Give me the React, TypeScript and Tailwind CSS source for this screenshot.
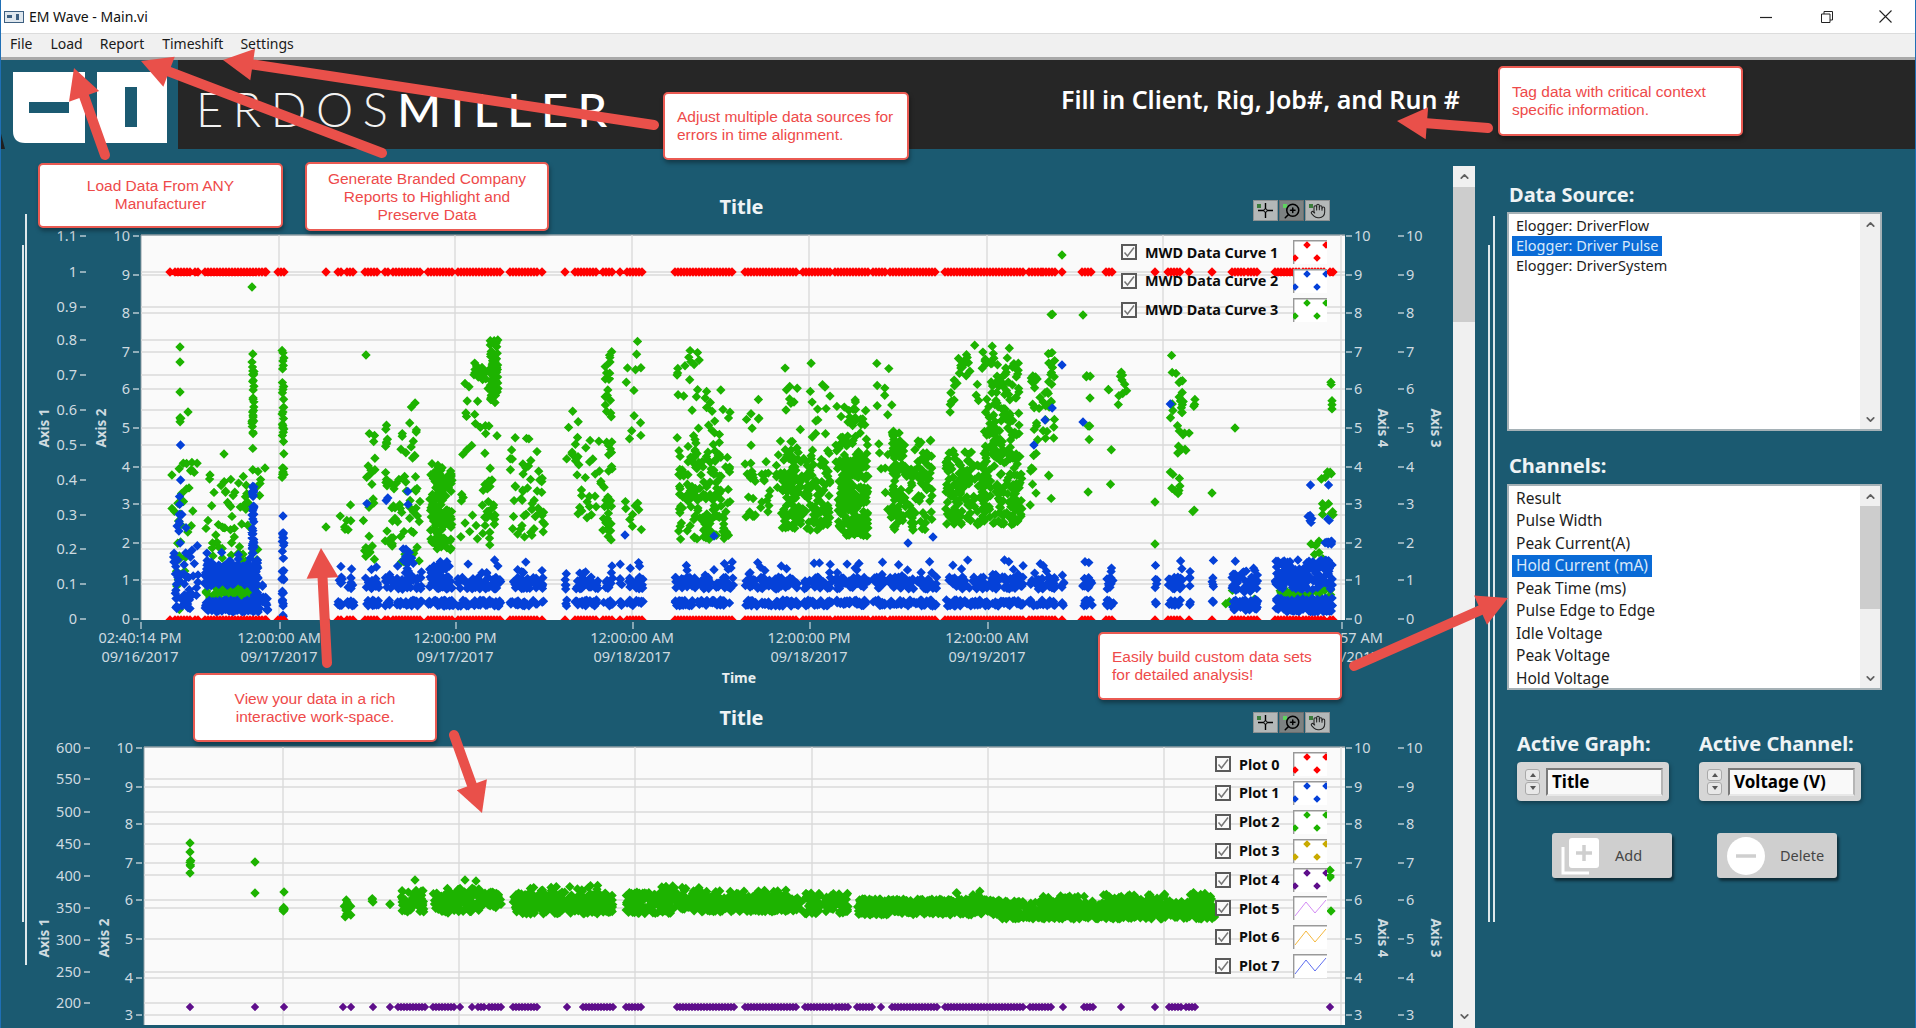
import React from 'react';
import { ChevronUp, ChevronDown, Hand, ZoomIn } from 'lucide-react';

type Seg = [number, number];
type Cluster = [number, number, number, number, number];

const RED_SEGS: Seg[] = [
  [170, 171], [175, 190], [195, 199], [205, 265], [266, 268], [278, 285], [326, 327], [338, 342], [347, 353],
  [365, 378], [385, 390], [393, 417], [420, 421], [428, 453], [458, 500], [510, 537], [542, 543], [565, 566],
  [575, 597], [603, 612], [620, 621], [627, 643], [675, 733], [745, 798], [803, 831], [835, 868], [873, 885],
  [890, 936], [945, 1023], [1029, 1042], [1043, 1055], [1062, 1063], [1082, 1092], [1106, 1114], [1155, 1156],
  [1168, 1182], [1189, 1190], [1212, 1213], [1232, 1245], [1248, 1258], [1275, 1300], [1303, 1326], [1330, 1333],
];

const G1_GREEN: Cluster[] = [
  [180, 180, 347, 347, 1], [180, 180, 362, 362, 1], [180, 180, 392, 392, 1], [180, 181, 416, 424, 4], [188, 188, 412, 412, 1],
  [171, 198, 460, 530, 22], [176, 188, 530, 610, 12], [224, 224, 454, 454, 1], [207, 250, 475, 520, 24], [205, 258, 520, 575, 34],
  [205, 258, 582, 598, 90], [252, 254, 352, 410, 16], [252, 254, 410, 470, 14], [256, 262, 470, 500, 5], [265, 265, 468, 468, 1],
  [251, 252, 287, 287, 1], [282, 284, 347, 480, 34], [326, 326, 527, 527, 1], [340, 352, 502, 530, 7], [366, 366, 355, 355, 1],
  [366, 375, 430, 480, 9], [362, 375, 480, 560, 14], [385, 388, 405, 500, 10], [385, 395, 500, 560, 9],
  [398, 420, 400, 460, 14], [390, 420, 470, 570, 40], [428, 452, 450, 500, 14], [430, 452, 470, 550, 130], [458, 500, 370, 430, 10],
  [474, 486, 360, 380, 18], [490, 498, 340, 400, 60], [460, 500, 400, 540, 26], [480, 500, 480, 545, 20],
  [510, 538, 400, 470, 9], [512, 540, 460, 545, 34], [540, 545, 478, 532, 9], [565, 580, 410, 480, 8], [575, 600, 440, 520, 26],
  [605, 612, 350, 470, 26], [600, 612, 470, 540, 24], [626, 645, 340, 440, 12], [625, 642, 500, 535, 9],
  [676, 700, 350, 390, 12], [675, 730, 390, 460, 30], [678, 730, 450, 540, 150], [745, 760, 380, 450, 7], [745, 770, 460, 520, 30],
  [775, 800, 440, 520, 30], [785, 830, 360, 440, 22], [782, 830, 450, 530, 160], [835, 870, 400, 470, 60], [838, 868, 460, 536, 190],
  [875, 892, 360, 420, 8], [878, 900, 430, 520, 20], [892, 900, 430, 530, 60], [900, 932, 440, 530, 90], [945, 995, 345, 420, 38],
  [945, 985, 450, 525, 130], [985, 1020, 360, 450, 70], [982, 1022, 430, 525, 170], [1005, 1015, 345, 380, 6],
  [1030, 1040, 375, 400, 7], [1032, 1040, 395, 440, 9], [1030, 1038, 440, 505, 8], [1045, 1055, 350, 415, 18], [1040, 1055, 400, 440, 8],
  [1045, 1056, 465, 520, 3], [1062, 1062, 255, 255, 1], [1045, 1053, 313, 315, 2], [1083, 1083, 315, 315, 1], [1086, 1092, 375, 380, 3],
  [1090, 1090, 398, 398, 1], [1088, 1090, 425, 440, 3], [1085, 1090, 492, 492, 1], [1108, 1111, 387, 400, 2], [1110, 1112, 445, 490, 2],
  [1118, 1128, 372, 410, 9], [1155, 1155, 502, 502, 1], [1155, 1155, 544, 544, 1], [1170, 1178, 355, 380, 3], [1170, 1185, 372, 420, 14],
  [1172, 1190, 420, 455, 10], [1170, 1180, 470, 500, 9], [1193, 1195, 388, 410, 3], [1192, 1196, 505, 512, 2], [1212, 1212, 493, 493, 1], [1235, 1235, 428, 428, 1],
  [1310, 1330, 540, 560, 6], [1320, 1332, 470, 480, 6], [1330, 1332, 380, 385, 2], [1332, 1332, 400, 412, 3], [1322, 1334, 500, 520, 8],
  [1280, 1320, 590, 600, 24], [1318, 1332, 585, 600, 10], [1220, 1255, 590, 604, 5],
];

const G1_BLUE: Cluster[] = [
  [180, 182, 445, 445, 1], [180, 181, 480, 480, 1], [176, 190, 495, 535, 9], [172, 198, 540, 580, 16], [175, 198, 572, 610, 32],
  [205, 258, 552, 580, 30], [205, 258, 565, 586, 150], [205, 260, 600, 612, 130], [252, 254, 486, 560, 40], [253, 258, 560, 612, 40],
  [262, 268, 585, 612, 12], [283, 283, 516, 516, 1], [282, 284, 530, 620, 30], [366, 368, 500, 515, 1], [385, 388, 495, 510, 2],
  [400, 412, 490, 510, 2], [402, 412, 545, 590, 20], [428, 452, 565, 590, 40], [434, 450, 555, 570, 6], [1062, 1062, 365, 365, 1],
  [1033, 1035, 445, 445, 1], [1044, 1046, 420, 420, 1], [1052, 1053, 408, 408, 1], [1083, 1083, 422, 422, 1],
  [1170, 1172, 404, 404, 1], [1310, 1312, 485, 485, 1], [1328, 1330, 485, 485, 1], [1308, 1312, 515, 525, 5], [1326, 1332, 518, 522, 2], [1325, 1333, 540, 545, 8],
  [1275, 1333, 560, 590, 130], [1275, 1333, 598, 612, 110], [1232, 1258, 570, 592, 16], [1232, 1258, 598, 612, 12],
  [625, 625, 535, 535, 1], [714, 714, 536, 536, 1], [908, 908, 543, 543, 1], [933, 933, 537, 537, 1],
];

const G2_GREEN: Cluster[] = [
  [190, 190, 843, 843, 1], [190, 190, 852, 852, 1], [190, 191, 860, 868, 6], [190, 190, 873, 873, 1], [255, 255, 862, 862, 1], [255, 255, 893, 893, 1],
  [284, 284, 892, 892, 1], [283, 285, 902, 911, 6], [343, 353, 900, 917, 12], [372, 374, 897, 905, 4], [390, 390, 897, 905, 4],
  [401, 425, 890, 912, 50], [415, 415, 880, 880, 1], [432, 480, 888, 912, 120], [448, 448, 913, 913, 1], [465, 465, 880, 880, 1], [476, 476, 881, 881, 1],
  [480, 500, 892, 908, 26], [489, 503, 894, 906, 14],
  [513, 613, 893, 914, 300], [528, 600, 885, 893, 20], [626, 680, 892, 914, 160], [660, 700, 886, 898, 20], [680, 800, 896, 912, 320], [690, 790, 890, 898, 26],
  [803, 848, 893, 914, 90], [857, 1000, 899, 915, 420], [970, 982, 890, 898, 8], [955, 960, 893, 893, 2], [1000, 1215, 901, 919, 640], [1040, 1170, 894, 902, 50],
  [1190, 1215, 892, 900, 14], [1330, 1330, 870, 880, 6], [1331, 1331, 911, 911, 1],
];

const PURPLE_SEGS: Seg[] = [
  [190, 191], [255, 256], [284, 285], [343, 344], [351, 352], [373, 374], [390, 391], [398, 425], [433, 445], [448, 455], [460, 461], [472, 473], [478, 485],
  [489, 503], [513, 538], [567, 568], [583, 613], [626, 643], [677, 736], [745, 798], [805, 832], [836, 848], [857, 872], [881, 882], [892, 939],
  [945, 1024], [1030, 1053], [1063, 1064], [1084, 1093], [1121, 1122], [1155, 1156], [1169, 1181], [1186, 1196], [1330, 1331],
];

const makeRng = (seed: number) => () => {
  seed = (seed * 1664525 + 1013904223) % 4294967296;
  return seed / 4294967296;
};

const diamond = (x: number, y: number, r = 4.7) =>
  `M${x.toFixed(1)} ${(y - r).toFixed(1)}L${(x + r).toFixed(1)} ${y.toFixed(1)}L${x.toFixed(1)} ${(y + r).toFixed(1)}L${(x - r).toFixed(1)} ${y.toFixed(1)}Z`;

const scatter = (clusters: Cluster[], seed: number, r = 4.7) => {
  const rand = makeRng(seed);
  let d = '';
  clusters.forEach(([x0, x1, y0, y1, n]) => {
    for (let i = 0; i < n; i++) d += diamond(x0 + (x1 - x0) * rand(), y0 + (y1 - y0) * rand(), r);
  });
  return d;
};

const rowAlong = (segs: Seg[], y: number, r = 4.7) => {
  let d = '';
  segs.forEach(([a, b]) => {
    for (let x = a; x <= b; x += 3) d += diamond(x, y, r);
  });
  return d;
};

const blueBands = () => {
  const rand = makeRng(77);
  let d = '';
  RED_SEGS.filter(s => s[0] > 335 && s[0] < 1270).forEach(([a, b]) => {
    const w = b - a + 1;
    for (let i = 0; i < w * 1.1 + 1; i++) d += diamond(a + w * rand(), 577 + 12 * rand());
    for (let i = 0; i < w * 0.12; i++) d += diamond(a + w * rand(), 560 + 16 * rand());
    for (let i = 0; i < w * 0.9 + 1; i++) d += diamond(a + w * rand(), 600 + 6 * rand());
  });
  return d;
};

const CURVE1 = {
  green: scatter(G1_GREEN, 11),
  blue: scatter(G1_BLUE, 23) + blueBands(),
  red: rowAlong(RED_SEGS, 272),
  redLow: rowAlong(RED_SEGS, 620),
};
const CURVE2 = {
  green: scatter(G2_GREEN, 37),
  purple: rowAlong(PURPLE_SEGS, 1007, 4.2),
};

const TXT = '#cfdbe0';

const LeftTicks: React.FC<{ ticks: [string, number][]; right: number }> = ({ ticks, right }) => (
  <>
    {ticks.map(([label, y]) => (
      <g key={label + y}>
        <text x={right} y={y + 5} textAnchor="end" fill={TXT} fontSize="14.5">{label}</text>
        <line x1={right + 3} x2={right + 9} y1={y} y2={y} stroke={TXT} strokeWidth="1.3" />
      </g>
    ))}
  </>
);

const RightTicks: React.FC<{ ticks: [string, number][]; left: number }> = ({ ticks, left }) => (
  <>
    {ticks.map(([label, y]) => (
      <g key={label + y}>
        <line x1={left} x2={left + 6} y1={y} y2={y} stroke={TXT} strokeWidth="1.3" />
        <text x={left + 8} y={y + 5} fill={TXT} fontSize="14.5">{label}</text>
      </g>
    ))}
  </>
);

const AxisTitle: React.FC<{ x: number; y: number; up?: boolean; label: string }> = ({ x, y, up, label }) => (
  <text transform={`translate(${x} ${y}) rotate(${up ? -90 : 90})`} textAnchor="middle" fill={TXT} fontSize="13.5" fontWeight="700">{label}</text>
);

const Grid: React.FC<{ x0: number; x1: number; y0: number; y1: number; hs: number[]; vs: number[] }> = ({ x0, x1, y0, y1, hs, vs }) => (
  <>
    <rect x={x0} y={y0} width={x1 - x0} height={y1 - y0} fill="#fafafa" />
    <line x1={x0} x2={x1} y1={y0} y2={y0} stroke="#8f9ea5" strokeWidth="1.5" />
    <line x1={x0} x2={x0} y1={y0} y2={y1} stroke="#8f9ea5" strokeWidth="1" />
    {hs.map(y => <line key={y} x1={x0} x2={x1} y1={y} y2={y} stroke="#dadada" strokeWidth="1.4" />)}
    {vs.map(x => <line key={x} x1={x} x2={x} y1={y0} y2={y1} stroke="#dadada" strokeWidth="1.4" />)}
  </>
);

const AXIS2_A: [string, number][] = [['10', 236], ['9', 275], ['8', 313], ['7', 352], ['6', 389], ['5', 428], ['4', 467], ['3', 504], ['2', 543], ['1', 580], ['0', 619]];
const AXIS1_A: [string, number][] = [['1.1', 236], ['1', 272], ['0.9', 307], ['0.8', 340], ['0.7', 375], ['0.6', 410], ['0.5', 445], ['0.4', 480], ['0.3', 515], ['0.2', 549], ['0.1', 584], ['0', 619]];
const AXIS2_B: [string, number][] = [['10', 748], ['9', 787], ['8', 824], ['7', 863], ['6', 900], ['5', 939], ['4', 978], ['3', 1015]];
const AXIS1_B: [string, number][] = [['600', 748], ['550', 779], ['500', 812], ['450', 844], ['400', 876], ['350', 908], ['300', 940], ['250', 972], ['200', 1003]];

const XLABELS: [string, string, number][] = [
  ['02:40:14 PM', '09/16/2017', 140],
  ['12:00:00 AM', '09/17/2017', 279],
  ['12:00:00 PM', '09/17/2017', 455],
  ['12:00:00 AM', '09/18/2017', 632],
  ['12:00:00 PM', '09/18/2017', 809],
  ['12:00:00 AM', '09/19/2017', 987],
  ['01:24:57 AM', '09/20/2017', 1341],
];

const ChartOne = () => (
  <svg width="1453" height="477" viewBox="0 221 1453 477" className="block" fontFamily="'Noto Sans', sans-serif">
    <defs><clipPath id="clip-a"><rect x="141" y="235" width="1204" height="385" /></clipPath></defs>
    <Grid x0={141} x1={1345} y0={235} y1={620}
      hs={[272, 275, 307, 313, 340, 352, 375, 389, 410, 428, 445, 467, 480, 504, 515, 543, 549, 580, 584]}
      vs={[279, 455, 632, 809, 987, 1163, 1341]} />
    <g clipPath="url(#clip-a)">
      <path d={CURVE1.green} fill="#1db300" />
      <path d={CURVE1.blue} fill="#0541d8" />
      <path d={CURVE1.red} fill="#ff0000" />
      <path d={CURVE1.redLow} fill="#ff0000" />
    </g>
    <LeftTicks ticks={AXIS1_A} right={77} />
    <LeftTicks ticks={AXIS2_A} right={130} />
    <RightTicks ticks={AXIS2_A} left={1346} />
    <RightTicks ticks={AXIS2_A} left={1398} />
    <AxisTitle x={49} y={428} up label="Axis 1" />
    <AxisTitle x={106} y={428} up label="Axis 2" />
    <AxisTitle x={1378} y={428} label="Axis 4" />
    <AxisTitle x={1431} y={428} label="Axis 3" />
    {XLABELS.map(([a, b, x]) => (
      <g key={a + b}>
        <line x1={x + 1} x2={x + 1} y1={622} y2={629} stroke={TXT} strokeWidth="1.2" />
        <text x={x} y={643} textAnchor="middle" fill={TXT} fontSize="14.5">{a}</text>
        <text x={x} y={662} textAnchor="middle" fill={TXT} fontSize="14.5">{b}</text>
      </g>
    ))}
    <text x={739} y={683} textAnchor="middle" fill="#e8eef0" fontSize="14" fontWeight="700">Time</text>
  </svg>
);

const ChartTwo = () => (
  <svg width="1453" height="295" viewBox="0 733 1453 295" className="block" fontFamily="'Noto Sans', sans-serif">
    <defs><clipPath id="clip-b"><rect x="144" y="747" width="1201" height="278" /></clipPath></defs>
    <Grid x0={144} x1={1345} y0={747} y1={1025}
      hs={[779, 787, 812, 824, 844, 863, 875, 900, 908, 939, 972, 978, 1003, 1015]}
      vs={[283, 459, 635, 812, 988, 1164, 1341]} />
    <g clipPath="url(#clip-b)">
      <path d={CURVE2.green} fill="#1db300" />
      <path d={CURVE2.purple} fill="#5e0e8b" />
    </g>
    <LeftTicks ticks={AXIS1_B} right={81} />
    <LeftTicks ticks={AXIS2_B} right={133} />
    <RightTicks ticks={AXIS2_B} left={1346} />
    <RightTicks ticks={AXIS2_B} left={1398} />
    <AxisTitle x={49} y={938} up label="Axis 1" />
    <AxisTitle x={109} y={938} up label="Axis 2" />
    <AxisTitle x={1378} y={938} label="Axis 4" />
    <AxisTitle x={1431} y={938} label="Axis 3" />
  </svg>
);

const Toolbar = () => (
  <div className="flex gap-[1px] mr-[15px]">
    <div className="relative w-[25px] h-[21px] bg-[#b4b8b8] border border-[#8d9192] flex items-center justify-center">
      <span className="absolute left-[3px] top-[3px] w-[4px] h-[4px] bg-[#3c7d3c]" />
      <svg width="17" height="17" viewBox="0 0 17 17"><path d="M8.5 1v15M1 8.5h15" stroke="#000" strokeWidth="1.4" /><circle cx="8.5" cy="8.5" r="1.6" fill="#b4b8b8" stroke="#000" /></svg>
    </div>
    <div className="relative w-[25px] h-[21px] bg-[#7d8282] border border-[#6a6e6f] flex items-center justify-center">
      <span className="absolute left-[3px] top-[3px] w-[4px] h-[4px] bg-[#5fd35f]" />
      <ZoomIn className="w-[18px] h-[18px] text-black scale-x-[-1]" strokeWidth={2} />
    </div>
    <div className="relative w-[25px] h-[21px] bg-[#b4b8b8] border border-[#8d9192] flex items-center justify-center">
      <span className="absolute left-[3px] top-[3px] w-[4px] h-[4px] bg-[#3c7d3c]" />
      <Hand className="w-[16px] h-[16px] text-[#222]" strokeWidth={1.6} />
    </div>
  </div>
);

const GraphTitle: React.FC<{ h: string; mb: string }> = ({ h, mb }) => (
  <div className={`ml-[138px] w-[1207px] flex items-end ${h}`}>
    <div className="flex-1" />
    <div className={`text-[20px] leading-[26px] font-bold text-[#eef3f5] ${mb}`}>Title</div>
    <div className="flex-1 flex justify-end"><Toolbar /></div>
  </div>
);

const Swatch: React.FC<{ color: string; line?: boolean }> = ({ color, line }) => (
  <svg width="34" height="24" viewBox="0 0 34 24" className="block">
    <rect width="34" height="24" fill="#fff" />
    <path d="M0.7 24V0.7H34" fill="none" stroke="#999" strokeWidth="1.4" />
    {line ? (
      <path d="M2 20L13 6L22 17L33 4" fill="none" stroke={color} strokeWidth="1" />
    ) : (
      <path d={diamond(14, 5, 3.8) + diamond(33, 5, 3.8) + diamond(2, 18, 3.8) + diamond(24, 18, 3.8)} fill={color} />
    )}
  </svg>
);

const CheckBox = () => (
  <div className="w-[16px] h-[16px] border-2 border-[#5a5a5a] bg-[#fafafa] flex items-center justify-center">
    <svg width="12" height="12" viewBox="0 0 12 12"><path d="M1.5 6.5L4.5 10L11 1.5" fill="none" stroke="#777" strokeWidth="1.5" /></svg>
  </div>
);

const LegendRow: React.FC<{ label: string; color: string; line?: boolean; textW: string }> = ({ label, color, line, textW }) => (
  <div className="flex items-center h-[28.8px]">
    <CheckBox />
    <span className={`ml-[8px] ${textW} text-[14.4px] font-bold text-[#0c0c0c] whitespace-nowrap`}>{label}</span>
    <Swatch color={color} line={line} />
  </div>
);

const ListBox: React.FC<{ w: string; h: string; children: React.ReactNode; thumb?: string; pt: string }> = ({ w, h, children, thumb, pt }) => (
  <div className={`${w} ${h} flex bg-white border-2 border-[#a5b1b6] overflow-hidden`}>
    <div className={`flex-1 pl-[3px] ${pt} overflow-hidden`}>{children}</div>
    <div className="w-[20px] bg-[#f0f0f0] flex flex-col items-center justify-between">
      <div className="w-full">
        <div className="h-[20px] flex items-center justify-center"><ChevronUp className="w-[13px] h-[13px] text-[#606060]" strokeWidth={3.2} /></div>
        {thumb && <div className={`${thumb} bg-[#cdcdcd]`} />}
      </div>
      <div className="h-[20px] flex items-center justify-center"><ChevronDown className="w-[13px] h-[13px] text-[#606060]" strokeWidth={3.2} /></div>
    </div>
  </div>
);

const ListItem: React.FC<{ label: string; selected?: boolean; cls: string }> = ({ label, selected, cls }) => (
  <div className={`${cls} flex items-center text-[#1d1d1d]`}>
    <span className={selected ? 'bg-[#0a6bd6] text-[#d9e9fb] px-[4px] h-full flex items-center' : 'px-[4px]'}>{label}</span>
  </div>
);

const Spinner = () => (
  <div className="w-[15px] h-[26px] flex flex-col gap-[1px]">
    <div className="flex-1 bg-[#e8e8e8] border border-[#a9a9a9] rounded-[3px] flex items-center justify-center">
      <span className="w-0 h-0 border-x-[3.5px] border-x-transparent border-b-[4px] border-b-[#555]" />
    </div>
    <div className="flex-1 bg-[#e8e8e8] border border-[#a9a9a9] rounded-[3px] flex items-center justify-center">
      <span className="w-0 h-0 border-x-[3.5px] border-x-transparent border-t-[4px] border-t-[#555]" />
    </div>
  </div>
);

const Ring: React.FC<{ label: string; w: string; box: string }> = ({ label, w, box }) => (
  <div className={`${w} h-[39px] bg-[#d6d6d6] rounded-[4px] shadow-[1px_2px_4px_rgba(0,0,0,0.35)] flex items-center pl-[8px] gap-[6px]`}>
    <Spinner />
    <div className={`${box} h-[28px] bg-[#f9f9f9] border-2 border-t-[#7a7a7a] border-l-[#7a7a7a] border-r-[#b5b5b5] border-b-[#e8e8e8] flex items-center pl-[4px] text-[17px] font-bold text-black`}>{label}</div>
  </div>
);

const Callout: React.FC<{ cls: string; children: React.ReactNode }> = ({ cls, children }) => (
  <div className={`absolute bg-white border-2 border-[#ea5a52] rounded-[5px] shadow-[1px_3px_4px_rgba(0,0,0,0.35)] text-[#ee4a4a] text-[15.5px] leading-[18px] font-['Liberation_Sans',sans-serif] ${cls}`}>
    {children}
  </div>
);

const Arrow: React.FC<{ from: [number, number]; to: [number, number] }> = ({ from, to }) => {
  const dx = to[0] - from[0];
  const dy = to[1] - from[1];
  const len = Math.hypot(dx, dy);
  const ux = dx / len;
  const uy = dy / len;
  const bx = to[0] - ux * 30;
  const by = to[1] - uy * 30;
  const w = 16;
  return (
    <g>
      <line x1={from[0]} y1={from[1]} x2={bx} y2={by} stroke="#e9504a" strokeWidth="10" strokeLinecap="round" />
      <polygon points={`${to[0]},${to[1]} ${bx - uy * w},${by + ux * w} ${bx + uy * w},${by - ux * w}`} fill="#e9504a" />
    </g>
  );
};

const Logo = () => (
  <svg width="178" height="89" viewBox="0 0 178 89" className="block">
    <path d="M0 70L5 89H0Z" fill="#1f1f1f" />
    <path d="M13 12H85V83H25Q13 83 13 71Z" fill="#fff" />
    <path d="M97 12H167V83H97Z" fill="#fff" />
    <rect x="29" y="42" width="40" height="11" fill="#1b5a71" />
    <rect x="125" y="27" width="12" height="40" fill="#1b5a71" />
  </svg>
);

const PanelLabel: React.FC<{ label: string; cls?: string }> = ({ label, cls }) => (
  <div className={`text-[20px] leading-[28px] font-bold text-[#eef3f5] whitespace-nowrap ${cls ?? ''}`}>{label}</div>
);

export default function App() {
  return (
    <div className="relative w-[1916px] h-[1028px] overflow-hidden flex flex-col bg-[#1b5a71] font-['Noto_Sans',sans-serif]">
      {/* title bar */}
      <div className="h-[33px] bg-white flex items-center shrink-0 pl-[4px]">
        <svg width="20" height="12" viewBox="0 0 20 12" className="mr-[5px]">
          <rect x="0.5" y="0.5" width="19" height="11" fill="#dfe7ee" stroke="#3d5f80" />
          <rect x="3" y="4" width="5" height="3" fill="#3d5f80" />
          <rect x="12" y="3" width="3" height="6" fill="#3d5f80" />
        </svg>
        <span className="text-[14px] text-[#111]">EM Wave - Main.vi</span>
        <div className="ml-auto flex items-center">
          <svg width="12" height="12" viewBox="0 0 12 12" className="mr-[49px]"><path d="M0 6.5H12" stroke="#222" strokeWidth="1.2" /></svg>
          <svg width="12" height="12" viewBox="0 0 12 12" className="mr-[46px]"><path d="M0.5 3H9V11.5H0.5ZM3 3V0.5H11.5V9H9" fill="none" stroke="#222" /></svg>
          <svg width="13" height="13" viewBox="0 0 13 13" className="mr-[24px]"><path d="M0.5 0.5L12.5 12.5M12.5 0.5L0.5 12.5" stroke="#222" strokeWidth="1.1" /></svg>
        </div>
      </div>

      {/* menu */}
      <div className="h-[27px] bg-[#f0f0f0] border-t border-[#dcdcdc] border-b-[3px] border-b-[#a9a9a9] flex items-center shrink-0 pb-[5px] text-[14px] text-[#1a1a1a]">
        <span className="ml-[10px]">File</span>
        <span className="ml-[18px]">Load</span>
        <span className="ml-[17px]">Report</span>
        <span className="ml-[18px]">Timeshift</span>
        <span className="ml-[17px]">Settings</span>
      </div>

      {/* banner */}
      <div className="h-[89px] bg-[#262626] flex shrink-0">
        <div className="bg-[#1b5a71]"><Logo /></div>
        <div className="ml-[18px] mt-[21px] text-[47px] leading-[56px] tracking-[9.5px] text-[#f2f2f2] font-['Lato',sans-serif] font-light whitespace-nowrap">
          ERDOS<span className="font-medium text-white">MILLER</span>
        </div>
        <div className="ml-auto mr-[456px] mt-[21px] text-[25px] leading-[36px] font-semibold text-white whitespace-nowrap">Fill in Client, Rig, Job#, and Run #</div>
      </div>

      {/* body */}
      <div className="flex flex-1 min-h-0">
        <div className="w-[1453px] shrink-0">
          <GraphTitle h="h-[72px]" mb="mb-[1px]" />
          <ChartOne />
          <GraphTitle h="h-[35px]" mb="mb-[2px]" />
          <ChartTwo />
        </div>

        <div className="mt-[17px] w-[22px] shrink-0 bg-[#f0f0f0] flex flex-col justify-between">
          <div>
            <div className="h-[21px] flex items-center justify-center"><ChevronUp className="w-[13px] h-[13px] text-[#606060]" strokeWidth={3.2} /></div>
            <div className="h-[135px] bg-[#cdcdcd]" />
          </div>
          <div className="h-[24px] flex items-center justify-center"><ChevronDown className="w-[13px] h-[13px] text-[#606060]" strokeWidth={3.2} /></div>
        </div>

        <div className="flex-1 pl-[32px] pt-[32px] flex flex-col">
          <PanelLabel label="Data Source:" cls="ml-[2px] mb-[3px]" />
          <ListBox w="w-[375px]" h="h-[219px]" pt="pt-[2px]">
            <ListItem cls="h-[20px] text-[14.5px]" label="Elogger: DriverFlow" />
            <ListItem cls="h-[20px] text-[14.5px]" label="Elogger: Driver Pulse" selected />
            <ListItem cls="h-[20px] text-[14.5px]" label="Elogger: DriverSystem" />
          </ListBox>

          <PanelLabel label="Channels:" cls="ml-[2px] mt-[21px] mb-[4px]" />
          <ListBox w="w-[375px]" h="h-[206px]" pt="pt-[1px]" thumb="h-[103px]">
            {['Result', 'Pulse Width', 'Peak Current(A)', 'Hold Current (mA)', 'Peak Time (ms)', 'Pulse Edge to Edge', 'Idle Voltage', 'Peak Voltage', 'Hold Voltage'].map(item => (
              <ListItem key={item} cls="h-[22.5px] text-[15.5px]" label={item} selected={item === 'Hold Current (mA)'} />
            ))}
          </ListBox>

          <div className="flex mt-[40px] ml-[10px] gap-[30px]">
            <div className="w-[152px]">
              <PanelLabel label="Active Graph:" cls="mb-[4px]" />
              <Ring label="Title" w="w-[152px]" box="w-[117px]" />
            </div>
            <div className="w-[162px]">
              <PanelLabel label="Active Channel:" cls="mb-[4px]" />
              <Ring label="Voltage (V)" w="w-[162px]" box="w-[127px]" />
            </div>
          </div>

          <div className="flex mt-[32px] ml-[45px] gap-[45px]">
            <div className="w-[120px] h-[45px] bg-[#cfcfcf] rounded-[3px] shadow-[2px_3px_3px_rgba(0,0,0,0.5)] flex items-center pl-[9px]">
              <svg width="38" height="38" viewBox="0 0 38 38">
                <path d="M2 10V36H28" fill="none" stroke="#fff" strokeWidth="3" />
                <rect x="8" y="1" width="30" height="30" rx="3" fill="#fff" />
                <path d="M23 8V24M15 16H31" stroke="#cfcfcf" strokeWidth="3.5" />
              </svg>
              <span className="ml-[16px] text-[14.5px] text-[#454545]">Add</span>
            </div>
            <div className="w-[120px] h-[45px] bg-[#cfcfcf] rounded-[3px] shadow-[2px_3px_3px_rgba(0,0,0,0.5)] flex items-center pl-[10px]">
              <svg width="38" height="38" viewBox="0 0 38 38">
                <circle cx="19" cy="19" r="19" fill="#fff" />
                <path d="M9 19H29" stroke="#cfcfcf" strokeWidth="3.5" />
              </svg>
              <span className="ml-[15px] text-[14.5px] text-[#454545]">Delete</span>
            </div>
          </div>
        </div>
      </div>

      {/* window edges and separators */}
      <div className="absolute left-0 top-0 w-[1px] h-full bg-[#1f6fb5]" />
      <div className="absolute right-0 top-0 w-[1px] h-full bg-[#1f6fb5]" />
      <div className="absolute left-[22px] top-[245px] w-[1.5px] h-[677px] bg-[#dfe8eb]" />
      <div className="absolute left-[25px] top-[214px] w-[1.5px] h-[751px] bg-[#dfe8eb]" />
      <div className="absolute left-[1488px] top-[245px] w-[1.5px] h-[677px] bg-[#dfe8eb]" />
      <div className="absolute left-[1493px] top-[216px] w-[1.5px] h-[706px] bg-[#dfe8eb]" />

      {/* graph legends */}
      <div className="absolute left-[1121px] top-[238px] flex flex-col">
        <LegendRow label="MWD Data Curve 1" color="#ff0000" textW="w-[148px]" />
        <LegendRow label="MWD Data Curve 2" color="#0541d8" textW="w-[148px]" />
        <LegendRow label="MWD Data Curve 3" color="#1db300" textW="w-[148px]" />
      </div>
      <div className="absolute left-[1215px] top-[750px] flex flex-col">
        <LegendRow label="Plot 0" color="#ff0000" textW="w-[54px]" />
        <LegendRow label="Plot 1" color="#0541d8" textW="w-[54px]" />
        <LegendRow label="Plot 2" color="#1db300" textW="w-[54px]" />
        <LegendRow label="Plot 3" color="#c9aa00" textW="w-[54px]" />
        <LegendRow label="Plot 4" color="#5e0e8b" textW="w-[54px]" />
        <LegendRow label="Plot 5" color="#d48cf5" textW="w-[54px]" line />
        <LegendRow label="Plot 6" color="#f5b83d" textW="w-[54px]" line />
        <LegendRow label="Plot 7" color="#5f6ff0" textW="w-[54px]" line />
      </div>

      {/* annotations */}
      <svg className="absolute left-0 top-0 pointer-events-none" width="1916" height="1028">
        <Arrow from={[105, 155]} to={[74, 68]} />
        <Arrow from={[382, 153]} to={[141, 61]} />
        <Arrow from={[654, 125]} to={[223, 60]} />
        <Arrow from={[1488, 128]} to={[1397, 121]} />
        <Arrow from={[327, 663]} to={[321, 548]} />
        <Arrow from={[454, 735]} to={[482, 813]} />
        <Arrow from={[1354, 666]} to={[1508, 598]} />
      </svg>

      <Callout cls="left-[38px] top-[163px] w-[245px] h-[65px] flex items-center justify-center text-center pb-[2px]">
        Load Data From ANY<br />Manufacturer
      </Callout>
      <Callout cls="left-[305px] top-[162px] w-[244px] h-[69px] flex items-center justify-center text-center">
        Generate Branded Company<br />Reports to Highlight and<br />Preserve Data
      </Callout>
      <Callout cls="left-[663px] top-[92px] w-[246px] h-[68px] flex items-center pl-[12px]">
        <div>Adjust multiple data sources for<br />errors in time alignment.</div>
      </Callout>
      <Callout cls="left-[1498px] top-[66px] w-[245px] h-[70px] flex items-center pl-[12px]">
        <div>Tag data with critical context<br />specific information.</div>
      </Callout>
      <Callout cls="left-[193px] top-[673px] w-[244px] h-[69px] flex items-center justify-center text-center">
        View your data in a rich<br />interactive work-space.
      </Callout>
      <Callout cls="left-[1098px] top-[632px] w-[244px] h-[68px] flex items-center pl-[12px]">
        <div>Easily build custom data sets<br />for detailed analysis!</div>
      </Callout>
    </div>
  );
}
